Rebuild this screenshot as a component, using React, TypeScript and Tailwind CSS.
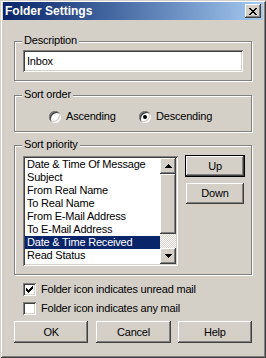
import React from 'react';

const raised =
  'bg-[#d4d0c8] shadow-[inset_-1px_-1px_#404040,inset_1px_1px_#ffffff,inset_-2px_-2px_#808080,inset_2px_2px_#d4d0c8]';
const sunken =
  'shadow-[inset_1px_1px_#808080,inset_-1px_-1px_#ffffff,inset_2px_2px_#404040,inset_-2px_-2px_#d4d0c8]';

function Group({ label, className, children }: { label: string; className: string; children: React.ReactNode }) {
  return (
    <div className={`relative border border-[#808080] shadow-[inset_1px_1px_#ffffff,1px_1px_#ffffff] ${className}`}>
      <span className="absolute left-[7px] top-[-8px] bg-[#d4d0c8] px-[2px] leading-[13px]">{label}</span>
      {children}
    </div>
  );
}

function Button({ label, className = '', isDefault = false }: { label: string; className?: string; isDefault?: boolean }) {
  if (isDefault) {
    return (
      <div className={`border border-black ${className}`}>
        <div className={`${raised} flex h-full items-center justify-center`}>{label}</div>
      </div>
    );
  }
  return <div className={`${raised} flex items-center justify-center ${className}`}>{label}</div>;
}

function Radio({ label, checked }: { label: string; checked?: boolean }) {
  return (
    <div className="flex items-center">
      <div className="flex h-[12px] w-[12px] items-center justify-center rounded-full bg-white shadow-[inset_1px_1px_#808080,inset_-1px_-1px_#ffffff,inset_2px_2px_#404040,inset_-2px_-2px_#d4d0c8]">
        {checked && <div className="h-[4px] w-[4px] rounded-full bg-black" />}
      </div>
      <span className="ml-[5px]">{label}</span>
    </div>
  );
}

function Checkbox({ label, checked }: { label: string; checked?: boolean }) {
  return (
    <div className="flex items-center">
      <div className={`${sunken} flex h-[13px] w-[13px] items-center justify-center bg-white`}>
        {checked && (
          <svg width="7" height="7" viewBox="0 0 7 7">
            <path d="M0 2h1v1h1v1h1V3h1V2h1V1h1V0h1v3H6v1H5v1H4v1H3v1H2V6H1V5H0z" fill="#000" />
          </svg>
        )}
      </div>
      <span className="ml-[5px]">{label}</span>
    </div>
  );
}

function Arrow({ up }: { up?: boolean }) {
  return (
    <div className={`${raised} flex h-[16px] w-[16px] items-center justify-center`}>
      <svg width="7" height="4" viewBox="0 0 7 4">
        <path d={up ? 'M3 0h1v1h1v1h1v1h1v1H0V3h1V2h1V1h1z' : 'M0 0h7v1H6v1H5v1H4v1H3V3H2V2H1V1H0z'} fill="#000" />
      </svg>
    </div>
  );
}

const fields = [
  'Date & Time Of Message',
  'Subject',
  'From Real Name',
  'To Real Name',
  'From E-Mail Address',
  'To E-Mail Address',
  'Date & Time Received',
  'Read Status',
  'Attachment',
];

export default function App() {
  return (
    <div
      className="h-[358px] w-[266px] overflow-hidden bg-[#d4d0c8] px-[3px] pt-[2px] text-[11px] leading-[13px] tracking-[-0.2px] text-black shadow-[inset_1px_1px_#d4d0c8,inset_-1px_-1px_#404040,inset_2px_2px_#ffffff,inset_-2px_-2px_#808080]"
      style={{ fontFamily: '"Liberation Sans", Arial, sans-serif' }}
    >
      <div className="flex h-[18px] items-center bg-gradient-to-r from-[#0a246a] to-[#a6caf0] pl-[2px] pr-[2px]">
        <span className="flex-1 text-[12px] font-bold tracking-normal text-white">Folder Settings</span>
        <div className={`${raised} flex h-[14px] w-[16px] items-center justify-center`}>
          <svg width="8" height="7" viewBox="0 0 8 7">
            <path d="M0 0h2v1h1v1h2V1h1V0h2v1H7v1H6v1H5v1h1v1h1v1h1v1H6V6H5V5H3v1H2v1H0V6h1V5h1V4h1V3H2V2H1V1H0z" fill="#000" />
          </svg>
        </div>
      </div>

      <div className="flex flex-col px-[11px]">
        <Group label="Description" className="mt-[21px] h-[40px] pl-[8px] pt-[8px]">
          <div className={`${sunken} flex h-[22px] w-[220px] items-center bg-white pl-[4px]`}>Inbox</div>
        </Group>

        <Group label="Sort order" className="mt-[14px] h-[37px] pt-[14px]">
          <div className="flex">
            <div className="ml-[34px] w-[90px]">
              <Radio label="Ascending" />
            </div>
            <Radio label="Descending" checked />
          </div>
        </Group>

        <Group label="Sort priority" className="mt-[13px] h-[130px] pl-[8px] pt-[10px]">
          <div className="flex">
            <div className={`${sunken} flex h-[110px] w-[155px] overflow-hidden bg-white p-[2px]`}>
              <div className="flex-1 overflow-hidden">
                {fields.map((f, i) => (
                  <div
                    key={f}
                    className={`h-[13px] pl-[2px] leading-[13px] ${i === 6 ? 'bg-[#0a246a] text-white' : ''}`}
                  >
                    {f}
                  </div>
                ))}
              </div>
              <div className="flex w-[16px] flex-col">
                <Arrow up />
                <div className={`${raised} h-[60px]`} />
                <div className="flex-1 bg-[repeating-conic-gradient(#d4d0c8_0%_25%,#ffffff_0%_50%)] bg-[length:2px_2px]" />
                <Arrow />
              </div>
            </div>
            <div className="ml-[7px] flex flex-col">
              <Button label="Up" isDefault className="mt-[-1px] h-[22px] w-[60px]" />
              <Button label="Down" className="ml-[1px] mt-[6px] h-[21px] w-[58px]" />
            </div>
          </div>
        </Group>

        <div className="mt-[8px] ml-[9px]">
          <Checkbox label="Folder icon indicates unread mail" checked />
        </div>
        <div className="mt-[6px] ml-[9px]">
          <Checkbox label="Folder icon indicates any mail" />
        </div>

        <div className="mt-[6px] flex gap-[7px]">
          <Button label="OK" className="h-[22px] w-[75px]" />
          <Button label="Cancel" className="ml-[1px] h-[22px] w-[75px]" />
          <Button label="Help" className="h-[22px] w-[75px]" />
        </div>
      </div>
    </div>
  );
}
